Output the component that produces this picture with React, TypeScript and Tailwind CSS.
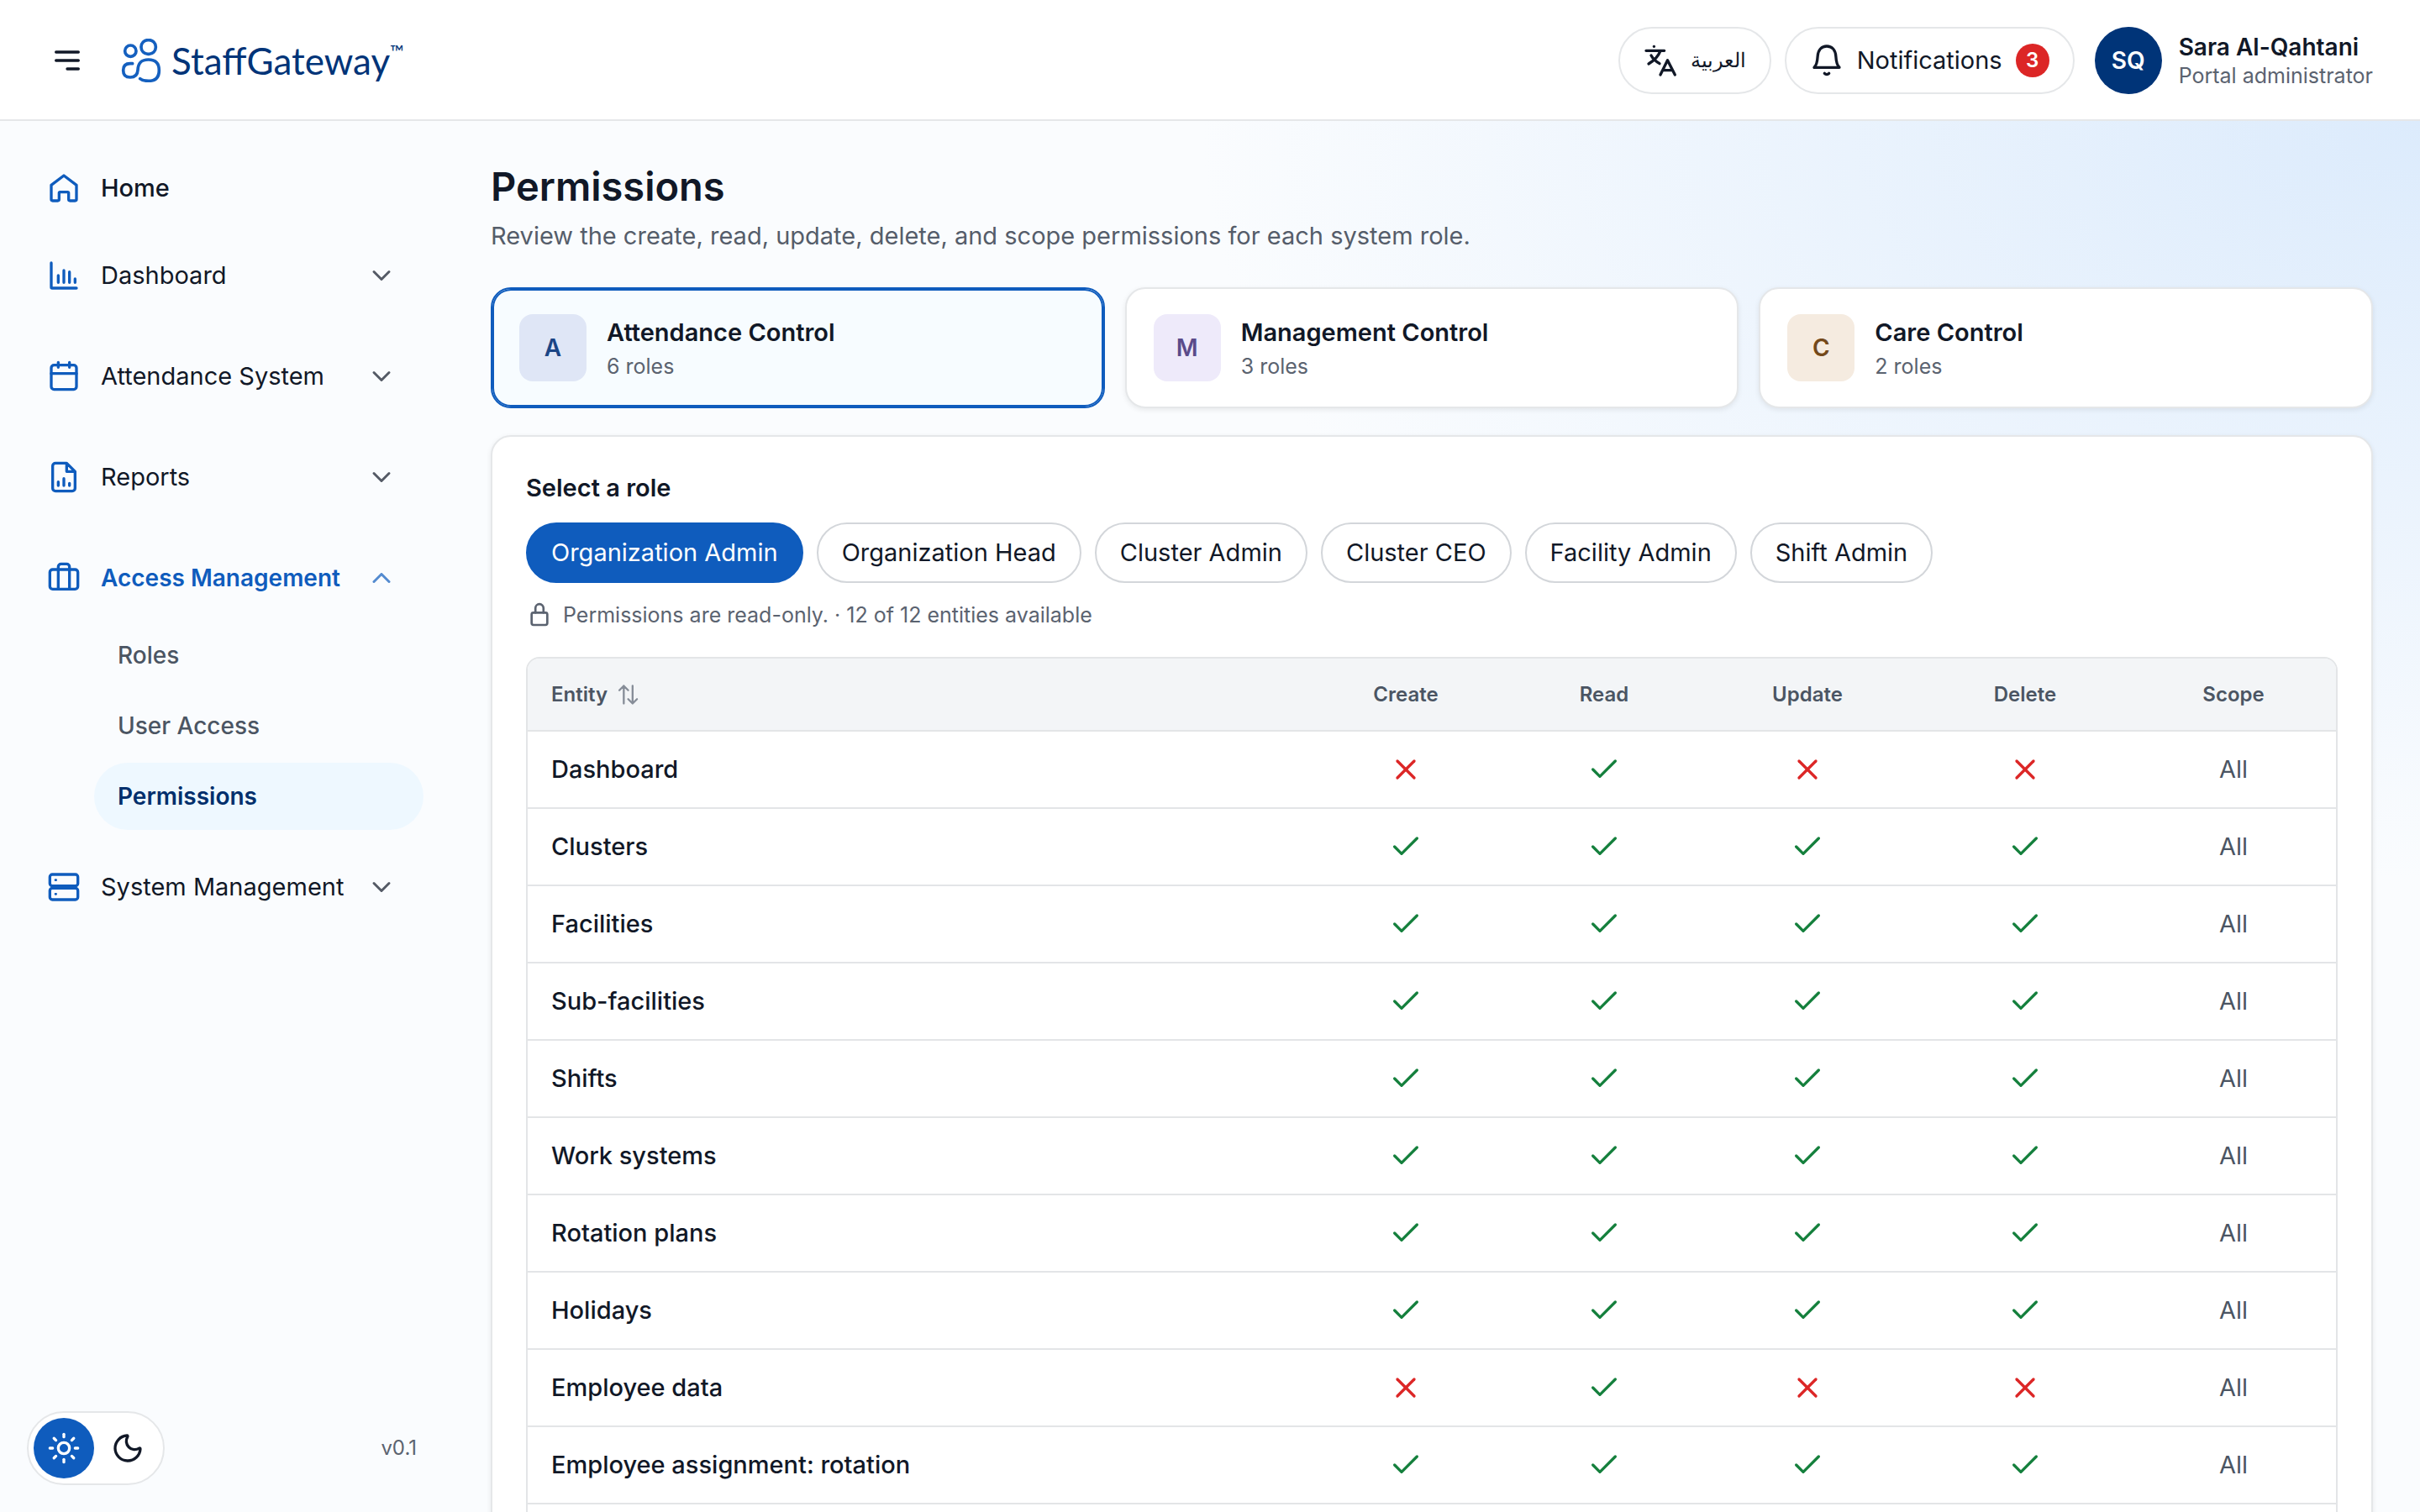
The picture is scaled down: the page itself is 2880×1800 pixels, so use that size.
import { useState, type ReactNode } from "react";
import { Briefcase, Check, ChevronDown, ChevronUp, Moon, Sun, X } from "lucide-react";
import clsx from "clsx";

const Icon = ({ children, className }: { children: ReactNode; className?: string }) => (
  <svg
    viewBox="0 0 24 24"
    fill="none"
    stroke="currentColor"
    strokeWidth="2"
    strokeLinecap="round"
    strokeLinejoin="round"
    aria-hidden="true"
    className={clsx("shrink-0", className ?? "size-10")}
  >
    {children}
  </svg>
);

const HomeIcon = () => (
  <Icon>
    <path d="M12 3l9 6.8V20a1 1 0 0 1-1 1h-3.6a1 1 0 0 1-1-1v-4.6a.6.6 0 0 0-.6-.6H9.2a.6.6 0 0 0-.6.6V20a1 1 0 0 1-1 1H4a1 1 0 0 1-1-1V9.8z" />
  </Icon>
);

const ChartIcon = () => (
  <Icon>
    <path d="M3 3v17.4a.6.6 0 0 0 .6.6H21M8 12v5M12 8.4V17M16 9.4V17M20 14.4V17" />
  </Icon>
);

const CalendarIcon = () => (
  <Icon>
    <rect x="3" y="4" width="18" height="17.4" rx="2" />
    <path d="M3 10h18M8 2v3.6M16 2v3.6" />
  </Icon>
);

const ReportIcon = () => (
  <Icon>
    <path d="M14 2H6a2 2 0 0 0-2 2v16a2 2 0 0 0 2 2h12a2 2 0 0 0 2-2V8zM14 2v6h6M8 15.4V18M12 13v5M16 16.4V18" />
  </Icon>
);

const ServerIcon = () => (
  <Icon>
    <rect x="2" y="3" width="20" height="8.2" rx="1.8" />
    <rect x="2" y="12.8" width="20" height="8.2" rx="1.8" />
    <path d="M6 7h.4M6 17h.4" strokeWidth="1.6" />
  </Icon>
);

const Logo = () => (
  <a href="#" className="flex items-center gap-3 text-[#003478]">
    <svg viewBox="0 0 138 156" fill="none" stroke="#1560bf" strokeWidth="11" strokeLinecap="round" className="h-13 w-12" aria-hidden="true">
      <ellipse cx="31" cy="44" rx="20" ry="20" />
      <rect x="69" y="5" width="52" height="50" rx="24" />
      <path d="M38 89h-8C12 89 5 98 5 113c0 17 9 25 25 25 17 0 26-8 27-26 1-22 9-37 38-37 27 0 38 13 38 38 0 27-13 38-38 38-13 0-23-2-30-8" />
    </svg>
    <span className="flex items-start font-[Lato,sans-serif] text-[44px] leading-[52px]">
      StaffGateway<span className="text-[22px] leading-8">™</span>
    </span>
  </a>
);

const groups = [
  { label: "Dashboard", icon: <ChartIcon />, items: [] },
  { label: "Attendance System", icon: <CalendarIcon />, items: [] },
  { label: "Reports", icon: <ReportIcon />, items: [] },
  {
    label: "Access Management",
    icon: <Briefcase className="size-10 shrink-0" />,
    items: ["Roles", "User Access", "Permissions"],
  },
  { label: "System Management", icon: <ServerIcon />, items: [] },
];

const areas = [
  { name: "Attendance Control", letter: "A", roles: 6, tile: "bg-[#dfe6f6] text-[#1b4585]" },
  { name: "Management Control", letter: "M", roles: 3, tile: "bg-[#eeeafa] text-[#5b4b8a]" },
  { name: "Care Control", letter: "C", roles: 2, tile: "bg-[#f5ebe0] text-[#74491a]" },
];

const roles = ["Organization Admin", "Organization Head", "Cluster Admin", "Cluster CEO", "Facility Admin", "Shift Admin"];

// create, read, update, delete
const FULL = [true, true, true, true];
const READ = [false, true, false, false];

const entities = [
  { name: "Dashboard", access: READ },
  { name: "Clusters", access: FULL },
  { name: "Facilities", access: FULL },
  { name: "Sub-facilities", access: FULL },
  { name: "Shifts", access: FULL },
  { name: "Work systems", access: FULL },
  { name: "Rotation plans", access: FULL },
  { name: "Holidays", access: FULL },
  { name: "Employee data", access: READ },
  { name: "Employee assignment: rotation", access: FULL },
  { name: "Employee assignment: shift", access: FULL },
  { name: "Attendance records", access: FULL },
];

function Header() {
  return (
    <header className="flex h-36 shrink-0 items-center justify-between border-b-2 border-[#e5e7e9] bg-white px-14 pt-0.5">
      <div className="flex items-center gap-10">
        <button type="button" aria-label="Toggle menu" className="flex size-12 items-center justify-center">
          <Icon>
            <path d="M4 6h16M4 12h16M12 18h8" />
          </Icon>
        </button>
        <Logo />
      </div>
      <div className="flex items-center gap-4">
        <button type="button" className="flex h-20 items-center gap-4 rounded-full border-2 border-[#e5e7e9] px-7">
          <Icon>
            <path d="M7.4 2h.1M1.8 5h13M12 5.2c-1.6 4-4.6 7-8.4 9.2M5.4 8.4c1.4 2.6 3.2 4.2 6 5.8M12 22.2l5.1-10.4 5.3 10.4M13.8 19h7" />
          </Icon>
          <span lang="ar" className="text-[24px] leading-10">
            العربية
          </span>
        </button>
        <button type="button" className="flex h-20 items-center gap-4 rounded-full border-2 border-[#e5e7e9] px-7">
          <Icon>
            <path d="M3 17h18c-1.6-1.4-2.2-3-2.5-8C18.2 4.5 15.6 1.8 12 1.8S5.800 4.500 5.500 9C5.200 14 4.600 15.600 3 17zM10.400 21.200c.9 1 2.300 1 3.200 0" />
          </Icon>
          <span className="text-[29px]">Notifications</span>
          <span className="flex size-10 items-center justify-center rounded-full bg-[#dc2626] text-[24px] font-semibold text-white">3</span>
        </button>
        <div className="ml-2 flex items-center gap-5">
          <span className="flex size-20 items-center justify-center rounded-full bg-[#003478] text-[28px] font-semibold text-white">SQ</span>
          <div className="flex flex-col">
            <span className="text-[28px] leading-9 font-semibold">Sara Al-Qahtani</span>
            <span className="text-[25px] leading-8 text-[#5b6370]">Portal administrator</span>
          </div>
        </div>
      </div>
    </header>
  );
}

function Sidebar() {
  const [open, setOpen] = useState("Access Management");
  const [dark, setDark] = useState(false);

  return (
    <aside className="flex w-[536px] shrink-0 flex-col justify-between px-8 pt-10 pb-8">
      <nav className="text-[29px]">
        <a href="#" className="mb-6 flex h-20 items-center gap-6 px-6 font-medium">
          <span className="text-[#0f5cbd]">
            <HomeIcon />
          </span>
          Home
        </a>
        {groups.map(({ label, icon, items }) => {
          const active = items.length > 0 && open === label;
          return (
            <div key={label} className="mb-7">
              <button
                type="button"
                aria-expanded={active}
                onClick={() => setOpen(active ? "" : label)}
                className={clsx("flex h-20 w-full items-center gap-6 pr-8 pl-6 text-left", active && "text-[28px] font-semibold text-[#0f5cbd]")}
              >
                <span className="text-[#0f5cbd]">{icon}</span>
                <span className="min-w-0 grow whitespace-nowrap">{label}</span>
                {active ? (
                  <ChevronUp className="size-9 shrink-0 opacity-70" />
                ) : (
                  <ChevronDown className="size-9 shrink-0 text-[#555b66]" />
                )}
              </button>
              <ul className="flex flex-col gap-1 pt-3 pl-20 text-[28px]">
                {active &&
                  items.map((item) => (
                    <li key={item}>
                      <a
                        href="#"
                        className={clsx(
                          "flex h-20 items-center rounded-full px-7",
                          item === "Permissions" ? "bg-[#eef8ff] font-semibold text-[#002f6c]" : "font-medium text-[#4b5563]"
                        )}
                      >
                        {item}
                      </a>
                    </li>
                  ))}
              </ul>
            </div>
          );
        })}
      </nav>
      <div className="flex items-center justify-between pr-2">
        <div className="flex gap-1 rounded-full border-2 border-[#e5e7e9] bg-white p-1.5">
          <button
            type="button"
            aria-label="Light theme"
            onClick={() => setDark(false)}
            className={clsx("flex size-18 items-center justify-center rounded-full", !dark && "bg-[#0f5cbd] text-white")}
          >
            <Sun className="size-10" />
          </button>
          <button
            type="button"
            aria-label="Dark theme"
            onClick={() => setDark(true)}
            className={clsx("flex size-18 items-center justify-center rounded-full", dark && "bg-[#0f5cbd] text-white")}
          >
            <Moon className="size-10" />
          </button>
        </div>
        <span className="text-[24px] text-[#5b6370]">v0.1</span>
      </div>
    </aside>
  );
}

function PermissionsTable() {
  return (
    <div className="overflow-hidden rounded-2xl border-2 border-[#e3e5e7]">
      <table className="w-full table-fixed text-center">
        <colgroup>
          <col />
          <col className="w-[254px]" />
          <col className="w-[218px]" />
          <col className="w-[266px]" />
          <col className="w-[252px]" />
          <col className="w-[244px]" />
        </colgroup>
        <thead>
          <tr className="h-[86px] border-b-2 border-[#e3e5e7] bg-[#f3f5f7] text-[24px] text-[#4b5563]">
            <th scope="col" className="px-7 text-left font-semibold">
              <button type="button" className="flex items-center gap-2.5">
                Entity
                <Icon className="size-7 text-[#868d98]">
                  <path d="M8 21V3M3.500 7.500 8 3l4.500 4.500M17 3v18M12.500 16.500 17 21l4.500-4.500" />
                </Icon>
              </button>
            </th>
            {["Create", "Read", "Update", "Delete", "Scope"].map((col) => (
              <th key={col} scope="col" className="font-semibold">
                {col}
              </th>
            ))}
          </tr>
        </thead>
        <tbody>
          {entities.map(({ name, access }) => (
            <tr key={name} className="h-[92px] border-b-2 border-[#e3e5e7] last:border-b-0">
              <th scope="row" className="px-7 text-left text-[29px] font-medium">
                {name}
              </th>
              {access.map((allowed, i) => (
                <td key={i}>
                  {allowed ? (
                    <Check aria-label="Allowed" className="mx-auto size-10 text-[#15803d]" />
                  ) : (
                    <X aria-label="Denied" className="mx-auto size-10 text-[#dc2626]" />
                  )}
                </td>
              ))}
              <td className="text-[29px] text-[#4b5563]">All</td>
            </tr>
          ))}
        </tbody>
      </table>
    </div>
  );
}

export default function App() {
  const [area, setArea] = useState("Attendance Control");
  const [role, setRole] = useState("Organization Admin");

  return (
    <div className="flex h-screen flex-col overflow-hidden bg-[#fafcfe] font-[Inter,sans-serif] text-[#111827]">
      <Header />
      <div className="flex min-h-0 grow bg-[radial-gradient(1450px_900px_at_100%_0%,#dcebfc,#fafcfe)]">
        <Sidebar />
        <main className="min-w-0 grow overflow-y-auto pt-12 pr-14 pb-12 pl-12 [scrollbar-width:none]">
          <h1 className="text-[47px] leading-[60px] font-semibold">Permissions</h1>
          <p className="mt-2 text-[29px] leading-[42px] text-[#555d6a]">
            Review the create, read, update, delete, and scope permissions for each system role.
          </p>

          <div className="mt-10 grid grid-cols-3 gap-6">
            {areas.map(({ name, letter, roles: count, tile }) => (
              <button
                key={name}
                type="button"
                aria-pressed={area === name}
                onClick={() => setArea(name)}
                className={clsx(
                  "flex h-36 items-center gap-6 rounded-3xl border-2 px-8 text-left",
                  area === name
                    ? "border-[#0f5cbd] bg-[#f7fcff] inset-ring-2 inset-ring-[#0f5cbd]"
                    : "border-[#e5e7e9] bg-white shadow-[0_2px_6px_rgba(0,0,0,0.08)]"
                )}
              >
                <span className={clsx("flex size-20 items-center justify-center rounded-2xl text-[28px] font-semibold", tile)}>{letter}</span>
                <span className="flex flex-col gap-1 pt-1">
                  <span className="text-[29px] leading-9 font-semibold">{name}</span>
                  <span className="text-[25px] leading-9 text-[#5b6370]">{count} roles</span>
                </span>
              </button>
            ))}
          </div>

          <section className="mt-8 rounded-3xl border-2 border-[#e5e7e9] bg-white p-10 shadow-[0_2px_6px_rgba(0,0,0,0.08)]">
            <h2 className="text-[29px] leading-[42px] font-semibold">Select a role</h2>
            <div className="mt-5 flex flex-wrap gap-4">
              {roles.map((name) => (
                <button
                  key={name}
                  type="button"
                  aria-pressed={role === name}
                  onClick={() => setRole(name)}
                  className={clsx(
                    "h-18 rounded-full border-2 px-7 text-[29px]",
                    role === name ? "border-[#0f5cbd] bg-[#0f5cbd] text-white" : "border-[#d3d6da] bg-white"
                  )}
                >
                  {name}
                </button>
              ))}
            </div>
            <p className="mt-5 mb-8 flex items-center gap-3 text-[25px] leading-9 text-[#5b6370]">
              <Icon className="size-8">
                <rect x="5" y="10" width="14" height="11" rx="1.6" />
                <path d="M8.400 10V6a3.600 3.600 0 0 1 7.200 0v4" />
              </Icon>
              Permissions are read-only. · 12 of 12 entities available
            </p>
            <PermissionsTable />
          </section>
        </main>
      </div>
    </div>
  );
}
